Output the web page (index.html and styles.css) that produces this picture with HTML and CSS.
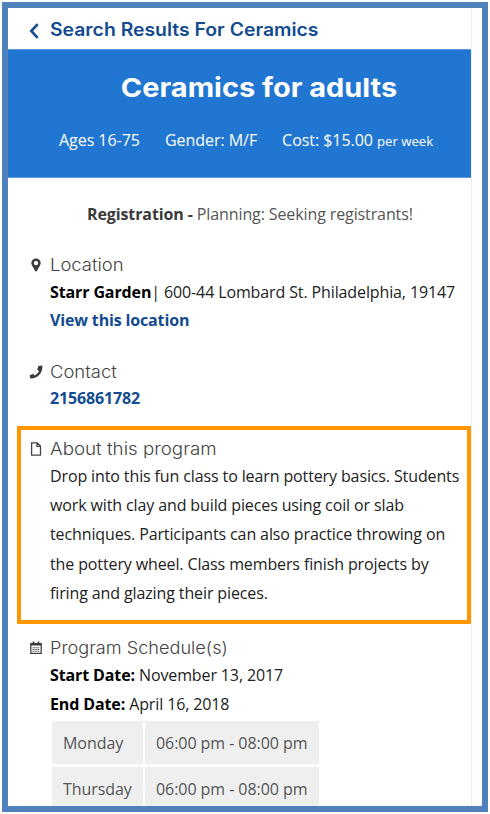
FILE: index.html
```html
<!DOCTYPE html>
<html lang="en">
<head>
<meta charset="utf-8">
<title>Ceramics for adults</title>
<link rel="stylesheet" href="styles.css">
</head>
<body>
<main class="frame">
  <div class="panel">
    <a class="back">
      <svg class="chevron" viewBox="0 0 10 16"><path d="M8.7 1.2 2.3 8l6.4 6.8"/></svg>
      <span class="back-text">Search Results For Ceramics</span>
    </a>
    <header class="hero">
      <h1 class="title">Ceramics for adults</h1>
      <div class="facts">
        <span>Ages 16-75</span>
        <span>Gender: M/F</span>
        <span>Cost: $15.00 <small>per week</small></span>
      </div>
    </header>
    <p class="registration"><b>Registration -</b> Planning: Seeking registrants!</p>

    <section class="section location">
      <svg class="icon" viewBox="0 0 12 14"><path fill-rule="evenodd" d="M6 .5A4.6 4.6 0 0 0 1.3 5c0 2.400 2.200 4.400 3.500 7.500Q6 14.300 7.200 12.500C8.500 9.400 10.700 7.400 10.700 5A4.600 4.600 0 0 0 6 .5ZM6 2.900a2.200 2.200 0 1 1 0 4.400 2.200 2.200 0 0 1 0-4.400Z"/></svg>
      <div class="body">
        <h2 class="heading h-location">Location</h2>
        <p><b>Starr Garden</b>| 600-44 Lombard St. Philadelphia, 19147</p>
        <p><a class="link">View this location</a></p>
      </div>
    </section>

    <section class="section contact">
      <svg class="icon" viewBox="0 0 12 14"><path d="M8.400 1 11.400.4Q12.300.3 12.400 1.400C12.500 8.300 7.500 13.200 1 13.400Q.2 13.400 0 12.500L-.3 10.200 3.200 8.800 4.600 10.500C6.600 9.500 8 8.100 9 6.100L7.200 4.700Z"/></svg>
      <div class="body">
        <h2 class="heading h-contact">Contact</h2>
        <p><a class="link">2156861782</a></p>
      </div>
    </section>

    <section class="section about">
      <svg class="icon" viewBox="0 0 12 14"><path class="line" d="M1.600.8h5.700l3.200 3.300v9.100H1.600ZM7 .8v3.500h3.500"/></svg>
      <div class="body">
        <h2 class="heading h-about">About this program</h2>
        <p class="description">Drop into this fun class to learn pottery basics. Students<br>work with clay and build pieces using coil or slab<br>techniques. Participants can also practice throwing on<br>the pottery wheel. Class members finish projects by<br>firing and glazing their pieces.</p>
      </div>
    </section>

    <section class="section schedule">
      <svg class="icon" viewBox="0 0 12 14"><path class="line" d="M.8 2.700h10.400v9.700H.8Z"/><path d="M.5 2.300h11v2.300H.5ZM2.700.4h1.700v2.300H2.700ZM7.600.4h1.700v2.300H7.600Z"/><path class="days" d="M2.500 6.700h7M2.500 8.500h7M2.500 10.300h7"/></svg>
      <div class="body">
        <h2 class="heading h-schedule">Program Schedule(s)</h2>
        <p><b>Start Date:</b> November 13, 2017</p>
        <p><b>End Date:</b> April 16, 2018</p>
        <div class="times">
          <span>Monday</span><span>06:00 pm - 08:00 pm</span>
          <span>Thursday</span><span>06:00 pm - 08:00 pm</span>
        </div>
      </div>
    </section>
  </div>
</main>
</body>
</html>
```

FILE: styles.css
```css
* { box-sizing: border-box; }
body { margin: 0; background: #fff; font-family: "Open Sans", sans-serif; font-size: 16px; color: #222; overflow: hidden; }
h1, h2, p { margin: 0; }
.frame { width: 486px; height: 810px; margin: 2px; border: 6px solid #4f81bd; overflow: hidden; }
.panel { width: 464px; height: 798px; border-right: 1px solid #eee; overflow: hidden; }
.back { display: flex; align-items: center; height: 41px; padding-left: 21px; color: #134b91; white-space: nowrap; }
.chevron { width: 10px; height: 16px; margin: 5px 11px 0 0; fill: none; stroke: currentColor; stroke-width: 2.6; }
.back-text { font: 600 18px/42px Inter, sans-serif; transform: scaleX(1.076); transform-origin: left; margin-top: 2px; }
.hero { width: 464px; height: 129px; background: #2176d2; color: #fff; text-align: center; border-top: 1px solid #5b9ae0; border-bottom: 1px solid #5b9ae0; }
.title { font: 700 26px/36px Inter, sans-serif; padding-top: 20px; padding-left: 38px; white-space: nowrap; transform: scaleX(1.113); transform-origin: 251px 50%; }
.facts { display: flex; gap: 25px; padding: 22px 0 0 51px; line-height: 24px; letter-spacing: -.04px; white-space: nowrap; }
.facts small { font-size: 13.2px; }
.registration { margin: 23px 0 0 79px; line-height: 26px; color: #555; letter-spacing: -.11px; white-space: nowrap; }
.registration b { color: #3a3a3a; }
.section { display: flex; gap: 8px; padding-left: 22px; }
.icon { flex: none; width: 12px; height: 14px; margin-top: 6px; fill: #3c3c3c; overflow: visible; }
.line { fill: none; stroke: #444; stroke-width: 1.3; }
.days { stroke: #555; stroke-width: 1.1; stroke-dasharray: 1.3 .5; }
.heading { width: max-content; font: 300 17px/26px Inter, sans-serif; color: #444; transform-origin: left; }
.h-location, .h-contact { transform: scaleX(1.085); }
.h-about { transform: scaleX(1.104); }
.h-schedule { transform: scaleX(1.067); }
.body p { line-height: 28px; letter-spacing: -.12px; white-space: nowrap; }
.body b { color: #000; }
.link { color: #134b91; font-weight: 700; letter-spacing: -.15px; }
.location { margin-top: 25px; }
.contact { margin-top: 25px; }
.contact p { line-height: 26px; }
.about { width: 454px; height: 198px; margin: 15px 0 0 9px; border: 4px solid #ff9800; padding: 6px 0 0 9px; }
.body .description { line-height: 29.2px; }
.schedule { margin-top: 11px; }
.schedule .body p { line-height: 29px; }
.times { display: grid; grid-template-columns: 91px 174px; grid-auto-rows: 43px; gap: 3px 2px; margin: 2px 0 0 2px; line-height: 44px; letter-spacing: -.06px; color: #555; white-space: nowrap; }
.times span { background: #efefef; padding-left: 11px; }
```
